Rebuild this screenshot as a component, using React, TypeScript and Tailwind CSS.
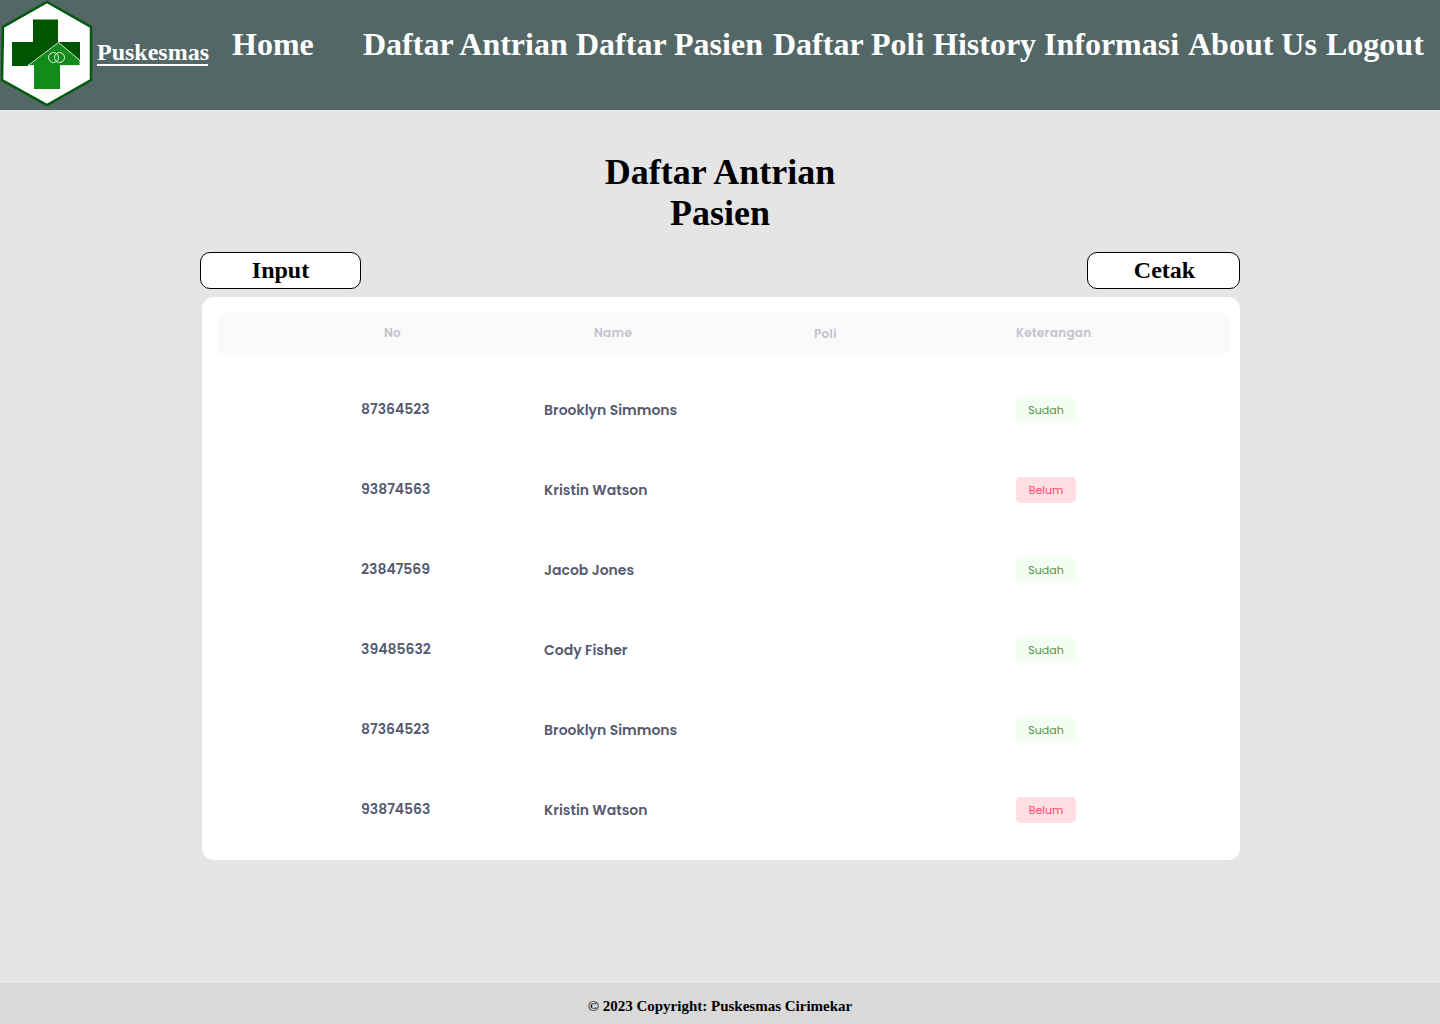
import React from "react";

const serif = "font-['Liberation_Serif','Times_New_Roman',serif]";
const sans = "font-['Poppins','Lato','Inter',sans-serif]";

const rows = [
  ["87364523", "Brooklyn Simmons", "Sudah"],
  ["93874563", "Kristin Watson", "Belum"],
  ["23847569", "Jacob Jones", "Sudah"],
  ["39485632", "Cody Fisher", "Sudah"],
  ["87364523", "Brooklyn Simmons", "Sudah"],
  ["93874563", "Kristin Watson", "Belum"],
];

function Logo() {
  return (
    <svg width="94" height="108" viewBox="0 0 94 108" className="shrink-0">
      <polygon points="47,2 91,27 91,80 47,105 2,80 3,27" fill="#fff" stroke="#005a0c" strokeWidth="2.500" />
      <path d="M33 19.500h25v22.500h22v23H33v1H12V42h21z" fill="#005500" />
      <path d="M58.500 43L80 60.500V65H60v24H34V65.500H29z" fill="#118c1a" />
      <path d="M28 65.500L58.500 42.500L80 60.500V65.500M28 65.500H34M60 65.500H80" fill="none" stroke="#dfeedf" strokeWidth="1" />
      <circle cx="53.500" cy="57.500" r="5" fill="none" stroke="#e6f2e6" strokeWidth="1" />
      <circle cx="59.500" cy="57.500" r="5" fill="none" stroke="#e6f2e6" strokeWidth="1" />
    </svg>
  );
}

const nav = [
  ["Home", "w-[131px]"],
  ["Daftar Antrian", "w-[213px]"],
  ["Daftar Pasien", "w-[197px]"],
  ["Daftar Poli", "w-[160px]"],
  ["History", "w-[111px]"],
  ["Informasi", "w-[144px]"],
  ["About Us", "w-[138px]"],
  ["Logout", "w-[98px]"],
];

export default function App() {
  return (
    <div className={`flex h-[1024px] flex-col bg-[#e5e5e5] ${serif}`}>
      <header className="flex h-[110px] shrink-0 items-start overflow-hidden bg-[#536767]">
        <Logo />
        <a className="ml-[3px] mt-[40px] w-[111px] border-b-2 border-white text-[24px] leading-[24px] font-bold whitespace-nowrap text-white">
          Puskesmas
        </a>
        <nav className="ml-[24px] mt-[26px] flex">
          {nav.map(([t, w]) => (
            <a key={t} className={`${w} text-[32px] leading-[37px] font-bold whitespace-nowrap text-white`}>
              {t}
            </a>
          ))}
        </nav>
      </header>

      <main className="flex flex-1 flex-col items-center">
        <h1 className="mt-[42px] w-[260px] text-center text-[36px] leading-[41px] font-bold text-black">
          Daftar Antrian Pasien
        </h1>
        <div className="mt-[18px] flex w-[1040px] justify-between">
          <button className="h-[37px] w-[161px] rounded-[10px] border border-black bg-white pb-[2px] text-[24px] leading-none font-bold text-black">
            Input
          </button>
          <button className="h-[37px] w-[153px] rounded-[10px] border border-black bg-white pb-[2px] pl-[2px] text-[24px] leading-none font-bold text-black">
            Cetak
          </button>
        </div>
        <section className={`mt-[8px] ml-[2px] flex h-[563px] w-[1038px] flex-col rounded-[12px] bg-white pt-[15px] pl-[15px] pr-[10px] ${sans}`}>
          <div className="grid h-[43px] shrink-0 grid-cols-[327px_236px_236px_1fr] items-center rounded-[8px] bg-[#fafafa] pb-[2px] text-[12px] font-semibold tracking-[0.3px] text-[#c2c2ce]">
            <span className="ml-[167px]">No</span>
            <span className="ml-[50px]">Name</span>
            <span className="ml-[34px] mt-[2px]">Poli</span>
            <span>Keterangan</span>
          </div>
          <div className="mt-[15px] flex flex-col">
            {rows.map(([no, name, st], i) => (
              <div key={i} className="grid h-[80px] grid-cols-[327px_236px_236px_1fr] items-center text-[14px] font-semibold text-[#555a70]">
                <span className="ml-[144px] -mt-[2px]">{no}</span>
                <span>{name}</span>
                <span />
                <span
                  className={`flex h-[26px] w-[60px] items-center justify-center rounded-[5px] text-[11px] font-normal ${
                    st === "Sudah" ? "bg-[#f4fdf2] text-[#5b9145]" : "bg-[#ffdfe4] text-[#fb4a68]"
                  }`}
                >
                  {st}
                </span>
              </div>
            ))}
          </div>
        </section>
      </main>

      <footer className="flex h-[41px] shrink-0 items-center justify-center bg-[#d9d9d9] pt-[5px] text-[15px] font-bold text-black">
        © 2023 Copyright: Puskesmas Cirimekar
      </footer>
    </div>
  );
}
